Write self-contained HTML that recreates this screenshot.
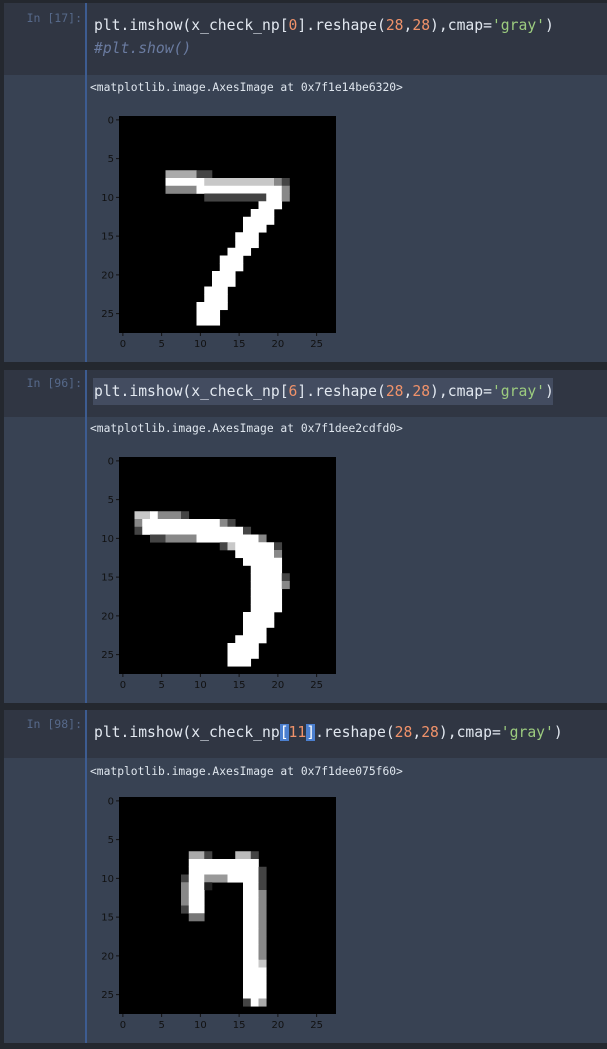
<!DOCTYPE html>
<html><head><meta charset="utf-8"><style>
*{margin:0;padding:0;box-sizing:border-box}
body{width:607px;height:1049px;background:#24282f;position:relative;overflow:hidden;font-family:"DejaVu Sans Mono","Liberation Mono",monospace}
.in{position:absolute;left:4px;right:0;background:#303643}
.out{position:absolute;left:4px;right:0;background:#384253}
.vl{position:absolute;left:85px;width:2px;background:#3d5c91}
.pr{position:absolute;left:4px;width:78px;text-align:right;font-size:11.5px;color:#56698a}
.code{position:absolute;left:94px;font-size:14.7px;color:#e2e8f0;line-height:23px;white-space:pre}
.n{color:#f0926a}.s{color:#9ccc7f}.c{color:#6a7ba0;font-style:italic}
.o{position:absolute;left:90px;font-size:11.3px;color:#dfe6ee;white-space:pre}
svg{position:absolute;left:90px}
svg text{font-family:"DejaVu Sans","Liberation Sans",sans-serif;font-size:10px;fill:#111}
.hb{background:#4b7fcf;color:#fff}
</style></head><body>

<div class="in" style="top:3px;height:72px"></div>
<div class="out" style="top:75px;height:287px"></div>
<div class="vl" style="top:3px;height:359px"></div>
<div class="pr" style="top:11px">In [17]:</div>
<div class="code" style="top:14px">plt.imshow(x_check_np[<span class="n">0</span>].reshape(<span class="n">28</span>,<span class="n">28</span>),cmap=<span class="s">'gray'</span>)
<span class="c">#plt.show()</span></div>
<div class="o" style="top:81px">&lt;matplotlib.image.AxesImage at 0x7f1e14be6320&gt;</div>
<svg id="f1" style="top:106px" width="260" height="250"></svg>

<div class="in" style="top:370px;height:47px"></div>
<div class="out" style="top:417px;height:286px"></div>
<div class="vl" style="top:370px;height:333px"></div>
<div class="pr" style="top:376px">In [96]:</div>
<div style="position:absolute;left:93px;top:378px;width:460px;height:27px;background:#434c60"></div>
<div class="code" style="top:380px">plt.imshow(x_check_np[<span class="n">6</span>].reshape(<span class="n">28</span>,<span class="n">28</span>),cmap=<span class="s">'gray'</span>)</div>
<div class="o" style="top:422px">&lt;matplotlib.image.AxesImage at 0x7f1dee2cdfd0&gt;</div>
<svg id="f2" style="top:447px" width="260" height="250"></svg>

<div class="in" style="top:710px;height:48px"></div>
<div class="out" style="top:758px;height:285px"></div>
<div class="vl" style="top:710px;height:333px"></div>
<div class="pr" style="top:717px">In [98]:</div>
<div class="code" style="top:721px">plt.imshow(x_check_np<span class="hb">[</span><span class="n">11</span><span class="hb">]</span>.reshape(<span class="n">28</span>,<span class="n">28</span>),cmap=<span class="s">'gray'</span>)</div>
<div class="o" style="top:765px">&lt;matplotlib.image.AxesImage at 0x7f1dee075f60&gt;</div>
<svg id="f3" style="top:787px" width="260" height="250"></svg>

<script>
var C=7.75,X0=29,Y0=10;
function fig(id,rows){
 var s='<rect x="'+X0+'" y="'+Y0+'" width="'+(28*C)+'" height="'+(28*C)+'" fill="#000"/>';
 rows.forEach(function(r){var y=r[0];for(var i=1;i<r.length;i++){var a=r[i][0],b=r[i][1],f=r[i][2]||'#fff';
  s+='<rect x="'+(X0+a*C)+'" y="'+(Y0+y*C)+'" width="'+((b-a+1)*C+.3)+'" height="'+(C+.3)+'" fill="'+f+'"/>';}});
 [0,5,10,15,20,25].forEach(function(v){var p=v*C+C/2;
  s+='<line x1="'+(X0-3)+'" x2="'+X0+'" y1="'+(Y0+p)+'" y2="'+(Y0+p)+'" stroke="#111"/>';
  s+='<text x="'+(X0-5)+'" y="'+(Y0+p+3.5)+'" text-anchor="end">'+v+'</text>';
  s+='<line y1="'+(Y0+28*C)+'" y2="'+(Y0+28*C+3)+'" x1="'+(X0+p)+'" x2="'+(X0+p)+'" stroke="#111"/>';
  s+='<text y="'+(Y0+28*C+14)+'" x="'+(X0+p)+'" text-anchor="middle">'+v+'</text>';});
 document.getElementById(id).innerHTML=s;}
var g='#888',l='#c8c8c8',d='#444';
fig('f1',[[7,[6,9,'#aaa'],[10,11,d]],[8,[6,10],[11,19,l],[20,20,g],[21,21,d]],[9,[6,9,g],[10,20],[21,21,g]],[10,[11,18,d],[19,20],[21,21,g]],
[11,[18,20]],[12,[17,19]],[13,[16,19]],[14,[16,18]],[15,[15,17]],[16,[15,17]],[17,[14,16]],[18,[13,15]],[19,[13,15]],[20,[12,14]],[21,[12,14]],[22,[11,13]],[23,[11,13]],[24,[10,13]],[25,[10,12]],[26,[10,12]]]);
fig('f2',[[7,[2,3,l],[4,4],[5,7,g],[8,8,d]],[8,[2,2,g],[3,12],[13,13,g],[14,14,d]],[9,[2,2,d],[3,15],[16,16,d]],[10,[4,5,d],[6,9,g],[10,17],[18,18,g]],
[11,[13,13,d],[14,14,l],[15,19],[20,20,d]],[12,[15,19],[20,20,g]],[13,[16,20]],[14,[17,20]],[15,[17,20],[21,21,d]],[16,[17,20],[21,21,g]],[17,[17,20]],[18,[17,20]],[19,[17,20]],[20,[16,19]],[21,[16,19]],[22,[16,18]],[23,[15,18]],[24,[14,17]],[25,[14,17]],[26,[14,16]]]);
fig('f3',[[7,[9,10,'#aaa'],[11,11,d],[15,16,'#bbb'],[17,17,d]],[8,[9,17]],[9,[9,17],[18,18,d]],[10,[8,8,d],[9,10],[11,13,'#999'],[14,17],[18,18,d]],
[11,[8,8,g],[9,10],[11,11,'#222'],[16,17],[18,18,d]],[12,[8,8,g],[9,10],[16,17],[18,18,g]],[13,[8,8,g],[9,10],[16,17],[18,18,g]],[14,[8,8,d],[9,10],[16,17],[18,18,g]],[15,[9,10,'#777'],[16,17],[18,18,g]],
[16,[16,17],[18,18,g]],[17,[16,17],[18,18,g]],[18,[16,17],[18,18,g]],[19,[16,17],[18,18,g]],[20,[16,17],[18,18,g]],[21,[16,17],[18,18,l]],[22,[16,18]],[23,[16,18]],[24,[16,18]],[25,[16,18]],[26,[16,16,d],[17,17],[18,18,'#aaa']]]);
</script>
</body></html>
